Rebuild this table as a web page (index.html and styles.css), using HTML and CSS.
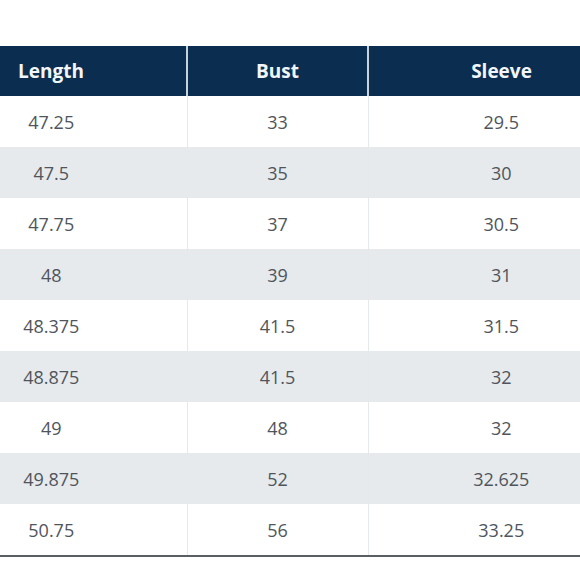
FILE: index.html
```html
<!DOCTYPE html>
<html>
<head>
<meta charset="utf-8">
<link rel="stylesheet" href="styles.css">
</head>
<body>
<div class="frame">
<table class="size-table">
  <colgroup>
    <col class="c1"><col class="c2"><col class="c3">
  </colgroup>
  <thead>
    <tr><th>Length</th><th>Bust</th><th>Sleeve</th></tr>
  </thead>
  <tbody>
    <tr><td>47.25</td><td>33</td><td>29.5</td></tr>
    <tr><td>47.5</td><td>35</td><td>30</td></tr>
    <tr><td>47.75</td><td>37</td><td>30.5</td></tr>
    <tr><td>48</td><td>39</td><td>31</td></tr>
    <tr><td>48.375</td><td>41.5</td><td>31.5</td></tr>
    <tr><td>48.875</td><td>41.5</td><td>32</td></tr>
    <tr><td>49</td><td>48</td><td>32</td></tr>
    <tr><td>49.875</td><td>52</td><td>32.625</td></tr>
    <tr><td>50.75</td><td>56</td><td>33.25</td></tr>
  </tbody>
</table>
</div>
</body>
</html>
```
FILE: styles.css
```css
html, body {
  margin: 0;
  padding: 0;
  background: #ffffff;
  overflow: hidden;
}
.frame {
  width: 580px;
  height: 580px;
  overflow: hidden;
  padding-top: 46px;
  box-sizing: border-box;
}
.size-table {
  border-collapse: collapse;
  table-layout: fixed;
  width: 718px;
  margin-left: -84px;
  font-family: "Open Sans", Lato, sans-serif;
  border-bottom: 2px solid #5a5d61;
}
.c1 { width: 271px; }
.c2 { width: 181px; }
.c3 { width: 266px; }
.size-table th {
  background: #0b2d50;
  color: #f2f6fa;
  font-weight: 700;
  font-size: 19px;
  height: 50px;
  padding: 0;
  text-align: center;
  border-left: 2px solid #c9d2db;
}
.size-table th:first-child,
.size-table td:first-child { border-left: none; }
.size-table td {
  height: 51px;
  padding: 0;
  text-align: center;
  font-size: 18px;
  color: #50555c;
  font-weight: 400;
  border-left: 1px solid #e6e9ec;
}
.size-table tbody tr:nth-child(even) td {
  background: #e6eaed;
}
```
